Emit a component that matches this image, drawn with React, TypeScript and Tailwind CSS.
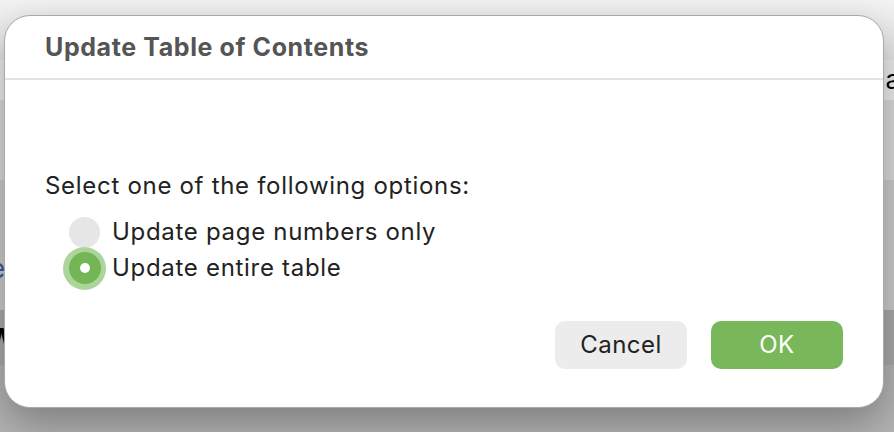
import React, { useState } from "react";

const options = [
  { id: "numbers", label: "Update page numbers only" },
  { id: "entire", label: "Update entire table" },
];

const Radio: React.FC<{ checked: boolean }> = ({ checked }) => {
  if (!checked) {
    return (
      <span className="flex h-[43px] w-[43px] items-center justify-center">
        <span className="h-[31px] w-[31px] rounded-full bg-[#e6e6e6]" />
      </span>
    );
  }
  return (
    <span className="flex h-[43px] w-[43px] items-center justify-center rounded-full bg-[#acd59c]">
      <span className="flex h-[32px] w-[32px] items-center justify-center rounded-full bg-[#74b656]">
        <span className="h-[10px] w-[10px] rounded-full bg-white" />
      </span>
    </span>
  );
};

export default function App() {
  const [choice, setChoice] = useState("entire");

  return (
    <div
      className="relative h-[432px] w-[894px] overflow-hidden bg-[#c9c9c9]"
      style={{ fontFamily: "Inter, 'Liberation Sans', sans-serif" }}
    >
      {/* document behind the sheet */}
      <div className="flex h-full flex-col">
        <div className="h-[60px] bg-gradient-to-b from-[#f3f3f3] to-[#e4e4e4]" />
        <div className="flex h-[40px] justify-end bg-[#ececec]">
          <span className="mr-[-6px] text-[26px] leading-[40px] text-black">a</span>
        </div>
        <div className="h-[80px] bg-[#d9d9d9]" />
        <div className="flex h-[130px] items-end bg-[#cbcbcb] pb-[28px]">
          <span className="ml-[-10px] text-[26px] leading-none text-[#3b5b9a]">e</span>
        </div>
        <div className="flex h-[55px] items-center bg-[#a9a9a9]">
          <span className="ml-[-12px] text-[26px] font-bold text-black">W</span>
        </div>
        <div className="flex-1 bg-[#b4b4b4]" />
      </div>

      {/* modal sheet */}
      <div className="absolute left-[4px] top-[15px] flex h-[393px] w-[880px] flex-col rounded-[26px] border border-[#a9a9a9] bg-white shadow-[0_16px_40px_rgba(0,0,0,0.3)]">
        <div className="flex h-[64px] items-center border-b-2 border-[#e3e3e3] pl-[40px] pt-[2px]">
          <h1 className="text-[25px] font-bold tracking-[0.6px] text-[#555555]">
            Update Table of Contents
          </h1>
        </div>

        <div className="flex flex-1 flex-col px-[40px] pb-[38px] pt-[92px]">
          <p className="text-[24px] leading-[28px] tracking-[0.7px] text-[#222222]">
            Select one of the following options:
          </p>
          <div className="mt-[14px] flex flex-col pl-[18px]">
            {options.map((o) => (
              <label
                key={o.id}
                onClick={() => setChoice(o.id)}
                className="flex h-[36px] cursor-pointer items-center gap-[6px]"
              >
                <Radio checked={choice === o.id} />
                <span className="text-[24px] leading-[28px] tracking-[0.7px] text-[#222222]">
                  {o.label}
                </span>
              </label>
            ))}
          </div>

          <div className="mt-auto flex justify-end gap-[24px]">
            <button className="h-[48px] w-[132px] rounded-[10px] bg-[#ececec] text-[24px] tracking-[0.5px] text-[#222222]">
              Cancel
            </button>
            <button className="h-[48px] w-[132px] rounded-[10px] bg-[#78b85a] text-[24px] tracking-[0.5px] text-white">
              OK
            </button>
          </div>
        </div>
      </div>
    </div>
  );
}
